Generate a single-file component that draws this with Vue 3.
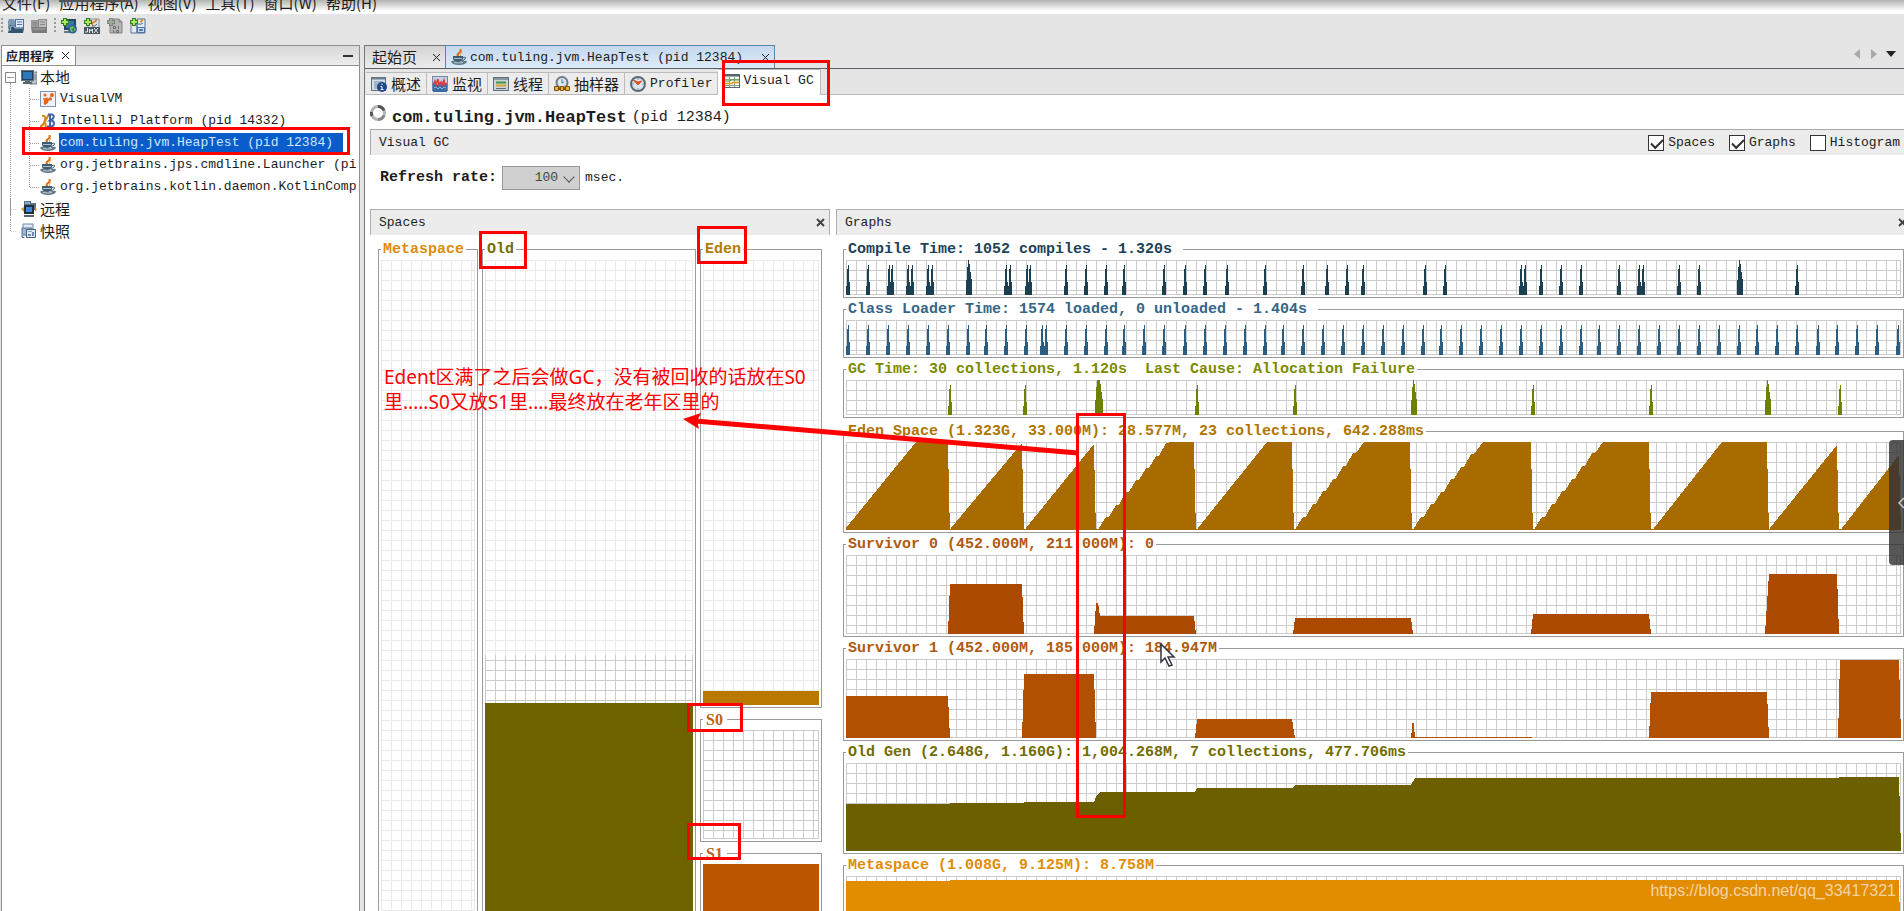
<script setup>
import { ref } from 'vue'

const menus = ['文件(F)', '应用程序(A)', '视图(V)', '工具(T)', '窗口(W)', '帮助(H)']

const plus = '<path d="M2 0h4v2h2v4H6v2H2V6H0V2h2z" fill="#2f7d1e"/><path d="M3 1h2v2h2v2H5v2H3V5H1V3h2z" fill="#a8e860"/>'
const icons = {
  open: '<path d="M0 3l1-2h5l1 2v8H0z" fill="#7d97b0"/><path d="M7 1h9v10H7z" fill="#4c72a4"/><path d="M8 2h7v7H8z" fill="#dfeaf6"/><path d="M9 4h5M9 6.500h5" stroke="#4c78b8"/><path d="M0 15L2 7h4l2 3h8l-1 5z" fill="#35536d"/><path d="M2 13l1-5h3l1 2h8" stroke="#a9c4da" fill="none"/>',
  save: '<path d="M0 2h7v8H0z" fill="#9a9a9a"/><path d="M7 1h9v10H7z" fill="#8a8a8a"/><path d="M8 2h7v7H8z" fill="#bdbdbd"/><path d="M9 4h5M9 6.500h5M2 5h4M2 7h4" stroke="#8a8a8a"/><path d="M0 9h16v6H1z" fill="#7c7c7c"/><path d="M2 11h12" stroke="#a4a4a4"/>',
  remote: '<path d="M3 1h12v11H3z" fill="#26485c"/><path d="M5 3h8v7H5z" fill="#3a78a8"/><path d="M3 13h8v2H3z" fill="#6c7880"/><circle cx="11.500" cy="11" r="4.500" fill="#2f6496"/><path d="M9 9l3-1 1 2-2 1 1 3h-2l-1-3zM13 10l2 1-2 3z" fill="#6fbf58"/>' + plus,
  jmx: '<path d="M4 1h11v13H4z" fill="#d9e0e6" stroke="#8493a0"/><path d="M12 1q1 2-2 3t-1 4" stroke="#e07818" stroke-width="1.500" fill="none"/><path d="M8 8q3 1 5-2" stroke="#4c7088" fill="none"/><path d="M0 9h16v7H0z" fill="#4a5862"/><path d="M3.500 10v4H1M5.500 15v-4l1.500 2 1.500-2v4M10 10l4 5M14 10l-4 5" stroke="#e4ebf0" fill="none"/>' + plus,
  core: '<path d="M4 1h8l3 3v11H3V3z" fill="#b4b4b4" stroke="#848484"/><path d="M12 1v3h3" stroke="#848484" fill="none"/><path d="M6.500 8.500h2v2h-2zM11.500 8v3M6.500 12v3M9.500 12.500h2v2h-2z" stroke="#6a6a6a" fill="none"/><path d="M2 0h4v2h2v4H6v2H2V6H0V2h2z" fill="#7c8878"/><path d="M3 1h2v2h2v2H5v2H3V5H1V3h2z" fill="#a0aa9c"/>',
  snapshotAdd: '<path d="M1 3h6v12H1zM7 1h8v14H7z" fill="#e4ebf4" stroke="#5c7494"/><path d="M12 1q1 2-2 3" stroke="#e07818" stroke-width="1.500" fill="none"/><path d="M8 6q3 1 5-1" stroke="#4c7088" fill="none"/><path d="M7.500 9.500h7v5h-7z" fill="#c8daee" stroke="#4872a8"/><path d="M9.500 11.500h3v1h-3z" fill="#fff" stroke="#4872a8"/>' + plus,
  computer: '<path d="M11 3h5v12h-7v-2h2z" fill="#c0c8ce" stroke="#6a7884"/><path d="M13 6h2M13 8h2M13 10h2" stroke="#6a7884"/><path d="M0 1h13v11H0z" fill="#5e7484"/><path d="M1 2h11v9H1z" fill="#20425e"/><path d="M2 3h9v7H2z" fill="#2c78b8"/><path d="M4 12h5v1h2v2H2v-2h2z" fill="#56666f"/>',
  visualvm: '<rect x=".5" y=".5" width="15" height="15" fill="#eef1f7" stroke="#7c94b8"/><circle cx="5" cy="4" r="1.500" fill="#e8641c"/><circle cx="12" cy="4" r="2" fill="#e8641c"/><circle cx="10.500" cy="8" r="1.500" fill="#e8641c"/><path d="M3 7q3 1 4-1l1 2 4-4-3 5q-1 4-4 5-2-1-1-4z" fill="#e8641c"/>',
  intellij: '<path d="M2 3q4-1 3 4T0 14M9 1Q6 7 2 13M4 8q2 3 2 7" stroke="#d8891c" stroke-width="2" fill="none"/><path d="M8 1.500h4q3 1 1 4l-3 2q4 0 4 3t-4 3H7M10 2v11M9 7h3" stroke="#3f64ac" stroke-width="2" fill="none"/>',
  java: '<path d="M9 0q2 2-1 4t0 4" stroke="#dd6c0c" stroke-width="2" fill="none"/><path d="M11 3q-3 2-1 5" stroke="#f0a040" fill="none"/><path d="M2 7h10v3q-1 3-5 3t-5-3z" fill="#3f5c70"/><path d="M12 8.500q4-1 2 1.500l-3 2" stroke="#3f5c70" fill="none"/><path d="M3 9.500h8" stroke="#a8bfcd"/><path d="M0 13q1-2 4-1 4 2 8 0 4-1 4 1-2 3-8 3t-8-3z" fill="#5f7787"/><path d="M3 13.500q5 1 9 0" stroke="#bccbd5" fill="none"/>',
  remotes: '<path d="M3 0h7v6H3zM9 2h6v7H9z" fill="#5c7284"/><path d="M4 1h5v2H4z" fill="#86a8c4"/><path d="M3 4h10v9H3z" fill="#20303e"/><path d="M5 6h6v5H5z" fill="#3f88d8"/><path d="M0 8l3-2v5zM16 8l-2-2v5z" fill="#e0982a"/><path d="M3 14h10v2H3z" fill="#56646f"/>',
  snapshots: '<path d="M2 1h10v8H2z" fill="#dfe9f4" stroke="#6c88ac"/><path d="M1 5h10v7H1z" fill="#9db6d4" stroke="#54749c"/><path d="M5.500 6.500h9v8h-9z" fill="#e4ebf3" stroke="#48607e"/><path d="M7 11h3v2H7zM11 9h2v4h-2z" fill="#6c8cb8"/><path d="M7 8.500h4" stroke="#8ca4c4"/><path d="M0 12l4 3H1z" fill="#48688c"/>',
  overview: '<rect x=".5" y="1.500" width="14" height="13" fill="#d4dfe8" stroke="#5c7080"/><path d="M1 2.500h13" stroke="#6c8090" stroke-width="2"/><path d="M3 6h9M3 8h5M3 10h4M3 12h4" stroke="#6c8aa4"/><circle cx="11" cy="11" r="5" fill="#1e4888"/><path d="M11 7.500v1.500M9.500 10.500H11v3M9.500 13.500h3" stroke="#fff" fill="none"/>',
  monitor: '<rect x=".5" y=".5" width="15" height="14" fill="#c4d2e4" stroke="#7488a4"/><path d="M1 9l2-2 2 2 2-3 2 3 2-2 2 2 2-2v9H1z" fill="#3c6ca8"/><path d="M1 9l2-4 1 4 2-6 1 6 2-3 1 3 2-5 1 5 2-2" stroke="#d83c38" fill="none" stroke-width="1.500"/><path d="M2 12l2-1 2 2 2-2 2 2 2-2 2 1" stroke="#88b4e0" fill="none"/>',
  threads: '<rect x=".5" y="1.500" width="15" height="13" fill="#c9d2d8" stroke="#5f6f7c"/><path d="M1 3h14" stroke="#8898a4" stroke-width="2"/><path d="M3 6.500h10" stroke="#3f9440" stroke-width="2"/><path d="M3 9.500h10" stroke="#dca030" stroke-width="2"/><path d="M3 12.500h10" stroke="#5c6c74"/>',
  sampler: '<circle cx="8" cy="6.500" r="5.500" fill="#dce8f0" stroke="#6c7c8c" stroke-width="2"/><path d="M8 3v4l2-1" stroke="#4878a8" fill="none"/><path d="M.500 10.500h4v4h-4zM6.500 10.500h3v4h-3zM11.500 10.500h4v4h-4z" fill="#f0b030" stroke="#805008"/><path d="M4 13h3M9 13h3" stroke="#805008" stroke-width="2"/>',
  profiler: '<circle cx="8" cy="8" r="7" fill="#d9e6ef" stroke="#5c6a76" stroke-width="2"/><path d="M8 2v2M8 12v2M2 8h2M12 8h2" stroke="#8098ac"/><path d="M3 4l5 5 4-4-4 1z" fill="#d85820" stroke="#d85820"/>',
  gc: '<rect x=".5" y="1.500" width="15" height="13" fill="#f2f6ee" stroke="#56646c"/><path d="M1 2.500h14" stroke="#56646c" stroke-width="2"/><path d="M5.500 4v10M10.500 4v10M1 6.500h14M1 12.500h14" stroke="#8ca090"/><path d="M1 8h5l1-1h8" stroke="#50a040" fill="none"/><path d="M1 10.500h7l1-1h6" stroke="#e0a020" fill="none" stroke-width="1.500"/>'
}

const tools = [
  { icon: 'open', label: '打开' }, { icon: 'save', label: '保存' }, null,
  { icon: 'remote', label: '添加远程主机' }, { icon: 'jmx', label: '添加 JMX 连接' },
  { icon: 'core', label: '添加核心转储' }, { icon: 'snapshotAdd', label: '添加快照' }
]

const localApps = [
  { icon: 'visualvm', text: 'VisualVM' },
  { icon: 'intellij', text: 'IntelliJ Platform (pid 14332)' },
  { icon: 'java', text: 'com.tuling.jvm.HeapTest (pid 12384)', selected: true },
  { icon: 'java', text: 'org.jetbrains.jps.cmdline.Launcher (pi' },
  { icon: 'java', text: 'org.jetbrains.kotlin.daemon.KotlinComp' }
]

const views = [
  { icon: 'overview', text: '概述', cjk: true }, { icon: 'monitor', text: '监视', cjk: true },
  { icon: 'threads', text: '线程', cjk: true }, { icon: 'sampler', text: '抽样器', cjk: true },
  { icon: 'profiler', text: 'Profiler' }, { icon: 'gc', text: 'Visual GC', active: true }
]

const toggles = ref([
  { text: 'Spaces', on: true }, { text: 'Graphs', on: true }, { text: 'Histogram', on: false }
])
const rate = ref('100')

const spike = (x, h) =>
  `M${x - 2} ${h}V${h - 4}L${x - 1} ${h - 13}V${h - 22}L${x} ${h - 30}H${x + 1}V${h - 13}L${x + 2} ${h - 12}V${h}z`
const burst = (x, h, w) => `M${x - w} ${h}V${h - 8}L${x - w + 2} 0H${x + w - 3}L${x + w} ${h - 12}V${h}z`

const compileAt = [2, 22, 43, 46, 62, 66, 82, 86, 160, 164, 181, 184, 220, 240, 260, 278, 318, 339, 359, 381, 419, 457, 481, 501, 517, 579, 599, 675, 679, 695, 715, 735, 773, 793, 797, 833, 853, 951]
const loaderAt = [2, 22, 42, 62, 82, 102, 122, 140, 160, 180, 196, 200, 220, 240, 260, 278, 298, 318, 339, 359, 379, 399, 419, 437, 457, 477, 497, 517, 537, 557, 577, 595, 615, 635, 655, 675, 695, 715, 735, 753, 773, 793, 813, 833, 853, 873, 893, 911, 931, 951, 972, 991, 1011, 1031, 1052]
const gcAt = [104, 179, 351, 449, 687, 805, 994]

// start, end of ramp, end of plateau, peak height, stepped ramp
const edenRuns = [
  [0, 70, 102, 0, 0], [105, 176, 176, 1, 0], [180, 248, 248, 2, 0], [253, 323, 348, 0, 1],
  [352, 421, 446, 0, 0], [450, 518, 564, 0, 1], [568, 637, 685, 0, 1], [689, 757, 803, 0, 1],
  [808, 876, 921, 0, 0], [924, 991, 991, 3, 0], [996, 1053, 1053, 13, 0]
]
const edenPath = edenRuns.map(([a, b, c, top, stepped]) => {
  let d = `M${a} 88V86`
  if (stepped) {
    for (let x = a + 9; x < b; x += 10) {
      const y = Math.round(86 - ((86 - top) * (x - a)) / (b - a))
      d += `L${x - 2} ${y}H${x + 1}`
    }
  }
  return d + `L${b} ${top}H${c}L${c + 1} 52L${c + 2} 88z`
}).join('') + 'M0 87H1055V88H0z'

const graphs = [
  { title: 'Compile Time: 1052 compiles - 1.320s ', h: 35, ink: '#1c4258', fill: '#1d3f52', d: compileAt.map(x => spike(x, 35)).join('') + burst(123, 35, 3) + burst(894, 35, 3) },
  { title: 'Class Loader Time: 1574 loaded, 0 unloaded - 1.404s ', h: 35, ink: '#336688', fill: '#2b5d80', d: loaderAt.map(x => spike(x, 35)).join('') },
  { title: 'GC Time: 30 collections, 1.120s  Last Cause: Allocation Failure', h: 35, ink: '#7d8a00', fill: '#6e8200', gap: true, d: gcAt.map(x => spike(x, 35)).join('') + burst(253, 35, 4) + burst(568, 35, 3) + burst(922, 35, 3) },
  { title: 'Eden Space (1.323G, 33.000M): 28.577M, 23 collections, 642.288ms', h: 88, ink: '#b07400', fill: '#a86b00', d: edenPath },
  { title: 'Survivor 0 (452.000M, 211.000M): 0', h: 79, ink: '#b05a10', fill: '#ab4a00', d: 'M102 79L104 29H176L178 79zM248 79L250 48H252L254 61H348L350 79zM447 79L449 63H565L567 79zM685 79L687 59H803L805 79zM919 79L923 19H991L993 79z' },
  { title: 'Survivor 1 (452.000M, 185.000M): 184.947M', h: 79, ink: '#b05a10', fill: '#b05000', d: 'M0 79V37H102L104 79zM176 79L178 15H248L250 79zM349 79L351 60H446L449 79zM565 79L567 59L569 78H686V79zM803 79L805 33H921L923 79zM992 79L994 1H1053L1055 79z' },
  { title: 'Old Gen (2.648G, 1.160G): 1,004.268M, 7 collections, 477.706ms', h: 88, ink: '#736c00', fill: '#6b5f00', d: 'M0 88V41H104V40H178V39H248L251 32L254 29H349L351 25H447L449 22H565L569 15H993V14H1053L1055 88z' },
  { title: 'Metaspace (1.008G, 9.125M): 8.758M', h: 88, ink: '#e08c08', fill: '#e28c00', d: 'M0 88V5H104V4H1053L1055 88z' }
]
</script>

<template>
  <div class="app">
    <nav class="menubar">
      <button v-for="m in menus" :key="m" type="button">{{ m }}</button>
    </nav>

    <div class="toolbar">
      <i class="grip"></i>
      <template v-for="(t, i) in tools" :key="i">
        <i v-if="!t" class="grip"></i>
        <button v-else type="button" :aria-label="t.label"><svg class="icon" viewBox="0 0 16 16" v-html="icons[t.icon]"></svg></button>
      </template>
    </div>

    <div class="workspace">
      <aside class="sidebar">
        <header class="side-head">
          <div class="side-tab">
            <span>应用程序</span>
            <button type="button" aria-label="关闭"><svg class="x" viewBox="0 0 9 9"><path d="M1 1l7 7M8 1l-7 7" /></svg></button>
          </div>
          <button type="button" class="minimize" aria-label="最小化"></button>
        </header>
        <ul class="tree">
          <li class="root first">
            <div class="row"><i class="expander"></i><svg class="icon" viewBox="0 0 16 16" v-html="icons.computer"></svg><span class="cjk">本地</span></div>
            <ul class="children">
              <li v-for="a in localApps" :key="a.text" class="row">
                <svg class="icon" viewBox="0 0 16 16" v-html="icons[a.icon]"></svg>
                <span class="name" :class="{ selected: a.selected }">{{ a.text }}</span>
              </li>
            </ul>
          </li>
          <li class="root"><div class="row"><i class="stub"></i><svg class="icon" viewBox="0 0 16 16" v-html="icons.remotes"></svg><span class="cjk">远程</span></div></li>
          <li class="root last"><div class="row"><i class="stub"></i><svg class="icon" viewBox="0 0 16 16" v-html="icons.snapshots"></svg><span class="cjk">快照</span></div></li>
        </ul>
      </aside>

      <main class="main">
        <div class="doc-tabs">
          <div class="doc-tab">
            <span class="cjk">起始页</span>
            <button type="button" aria-label="关闭"><svg class="x" viewBox="0 0 9 9"><path d="M1 1l7 7M8 1l-7 7" /></svg></button>
          </div>
          <div class="doc-tab current">
            <svg class="icon" viewBox="0 0 16 16" v-html="icons.java"></svg>
            <span class="doc-name">com.tuling.jvm.HeapTest (pid 12384)</span>
            <button type="button" aria-label="关闭"><svg class="x" viewBox="0 0 9 9"><path d="M1 1l7 7M8 1l-7 7" /></svg></button>
          </div>
          <div class="doc-nav">
            <button type="button" aria-label="向左"><svg width="12" height="12"><path d="M9 1v10L3 6z" fill="#a8a8a8" /></svg></button>
            <button type="button" aria-label="向右"><svg width="12" height="12"><path d="M3 1v10l6-5z" fill="#a8a8a8" /></svg></button>
            <button type="button" aria-label="列表"><svg width="12" height="12"><path d="M1 3h10L6 9z" fill="#222" /></svg></button>
          </div>
        </div>

        <div class="view-tabs">
          <button v-for="v in views" :key="v.text" type="button" :class="{ active: v.active }">
            <svg class="icon" viewBox="0 0 16 16" v-html="icons[v.icon]"></svg>
            <span :class="{ cjk: v.cjk }">{{ v.text }}</span>
          </button>
          <i class="rest"></i>
        </div>

        <h1 class="title">
          <svg width="18" height="18" viewBox="0 0 18 18" fill="none" stroke-width="3">
            <circle cx="9" cy="9" r="6.500" stroke="#b4b4b4" />
            <path d="M9 2.500a6.500 6.500 0 0 1 6 4M3 12a6.500 6.500 0 0 1-.5-4" stroke="#555" />
            <path d="M9 15.500a6.500 6.500 0 0 0 6-4" stroke="#888" />
          </svg>
          <b>com.tuling.jvm.HeapTest</b><span>(pid 12384)</span>
        </h1>

        <div class="section-bar">
          <span>Visual GC</span>
          <div class="toggles">
            <label v-for="t in toggles" :key="t.text"><input v-model="t.on" type="checkbox" />{{ t.text }}</label>
          </div>
        </div>

        <div class="refresh">
          <label for="rate">Refresh rate:</label>
          <div class="select">
            <select id="rate" v-model="rate"><option>100</option><option>200</option><option>500</option></select>
          </div>
          <span>msec.</span>
        </div>

        <div class="panels">
          <section class="spaces">
            <header class="panel-head">
              <span>Spaces</span>
              <button type="button" aria-label="关闭"><svg class="x bold" viewBox="0 0 9 9"><path d="M1 1l7 7M8 1l-7 7" /></svg></button>
            </header>
            <div class="space-row">
              <fieldset class="box meta"><legend>Metaspace</legend><div class="plot faint fill"></div></fieldset>
              <fieldset class="box old">
                <legend>Old</legend>
                <div class="plot faint reserved"></div>
                <div class="plot committed"></div>
                <div class="used"></div>
              </fieldset>
              <div class="young">
                <fieldset class="box eden"><legend>Eden</legend><div class="plot faint reserved"></div><div class="used"></div></fieldset>
                <fieldset class="box s0"><legend>S0</legend><div class="plot"></div></fieldset>
                <fieldset class="box s1"><legend>S1</legend><div class="used"></div></fieldset>
              </div>
            </div>
          </section>

          <section class="graphs">
            <header class="panel-head">
              <span>Graphs</span>
              <button type="button" aria-label="关闭"><svg class="x bold" viewBox="0 0 9 9"><path d="M1 1l7 7M8 1l-7 7" /></svg></button>
            </header>
            <div class="graph-list">
              <fieldset v-for="g in graphs" :key="g.title" class="box" :class="{ gap: g.gap }">
                <legend :style="{ color: g.ink }">{{ g.title }}</legend>
                <div class="plot" :style="{ height: g.h + 'px' }">
                  <svg :viewBox="`0 0 1055 ${g.h}`" preserveAspectRatio="none" shape-rendering="crispEdges"><path :d="g.d" :fill="g.fill" /></svg>
                </div>
              </fieldset>
            </div>
          </section>
        </div>
      </main>
    </div>

    <i class="mark m-tree"></i>
    <i class="mark m-view"></i>
    <i class="mark m-old"></i>
    <i class="mark m-eden"></i>
    <i class="mark m-s0"></i>
    <i class="mark m-s1"></i>
    <i class="mark m-graph"></i>
    <p class="note">Edent区满了之后会做GC，没有被回收的话放在S0<br />里.....S0又放S1里....最终放在老年区里的</p>
    <svg class="arrow" width="396" height="46" viewBox="0 0 396 46">
      <path d="M12 9L395 41" stroke="#f00" stroke-width="5" />
      <path d="M0 7L18 1L14 9L16 17z" fill="#f00" />
    </svg>
    <svg class="cursor" width="16" height="25" viewBox="0 0 16 25"><path d="M1 1v18l4-4 4 8 3-1-4-8h6z" fill="#fff" stroke="#334" stroke-width="1.500" /></svg>
    <button type="button" class="drawer" aria-label="展开"><svg width="6" height="12" viewBox="0 0 6 12"><path d="M6 1L1 6l5 5" fill="none" stroke="#ccc" stroke-width="1.500" /></svg></button>
    <span class="watermark">https://blog.csdn.net/qq_33417321</span>
  </div>
</template>

<style>
body { margin: 0; overflow: hidden; }
</style>

<style scoped>
.app {
  --mono: "Liberation Mono", "Noto Sans CJK SC", monospace;
  --cjk: "Noto Sans CJK SC", sans-serif;
  position: relative;
  display: flex;
  flex-direction: column;
  height: 100vh;
  overflow: hidden;
  background: #e5e5e5;
  color: #1c1c1c;
  font: 13px/20px var(--mono);
}
.app * { box-sizing: border-box; }
button { padding: 0; border: 0; background: none; color: inherit; font: inherit; }
ul { margin: 0; padding: 0; list-style: none; }
.icon { display: block; flex: none; width: 16px; height: 16px; }
.cjk { font: 15px/20px var(--cjk); }
.x { display: block; width: 9px; height: 9px; fill: none; stroke: #222; stroke-width: 1; }
.x.bold { stroke: #444; stroke-width: 2; }

.menubar {
  position: relative;
  display: flex;
  flex: none;
  align-items: flex-end;
  gap: 9px;
  height: 14px;
  padding: 0 0 1px 2px;
  overflow: hidden;
  background: linear-gradient(#b4b4b4, #fff 11px);
  font: 15px/20px var(--cjk);
}
.menubar::before { content: ""; position: absolute; top: 0; left: 59px; width: 71px; height: 2px; background: #555; }
.toolbar { display: flex; flex: none; align-items: flex-start; gap: 7px; height: 31px; padding: 4px 1px; }
.grip { width: 2px; height: 15px; background: repeating-linear-gradient(#999 0 2px, transparent 2px 4px); }
.grip + button { margin-left: -2px; }

.workspace { display: flex; flex: 1; min-height: 0; gap: 4px; }
.sidebar { display: flex; flex: none; flex-direction: column; width: 359px; margin-left: 1px; border: 1px solid #8c8f94; border-bottom: 0; background: #fff; }
.side-head { display: flex; flex: none; height: 20px; border-bottom: 1px solid #8c8f94; background: linear-gradient(#d8d8d8, #ececec); }
.side-tab { display: flex; align-items: center; gap: 7px; padding: 0 5px 0 4px; border-right: 1px solid #8c8f94; background: #fff; font: bold 12px/18px var(--cjk); }
.minimize { align-self: center; width: 10px; height: 2px; margin: 0 6px 0 auto; background: #333; }
.tree { overflow: hidden; padding-left: 3px; }
.row { display: flex; align-items: center; gap: 3px; height: 22px; white-space: nowrap; }
.root { position: relative; }
.root::before { content: ""; position: absolute; left: 5px; top: 0; height: 100%; border-left: 1px dotted #999; }
.root.first::before { top: 17px; }
.root.last::before { height: 11px; }
.expander { position: relative; z-index: 1; flex: none; width: 11px; height: 11px; margin-right: 2px; border: 1px solid #888; background: linear-gradient(#999, #999) center / 7px 1px no-repeat #fff; }
.stub { flex: none; width: 11px; margin-right: 2px; border-top: 1px dotted #999; clip-path: inset(0 0 0 5px); }
.children { position: relative; padding-left: 35px; }
.children::before { content: ""; position: absolute; left: 24px; top: 0; height: 99px; border-left: 1px dotted #999; }
.children .row { position: relative; }
.children .row::before { content: ""; position: absolute; left: -10px; width: 9px; border-top: 1px dotted #999; }
.name { min-width: 0; padding: 0 1px; overflow: hidden; }
.name.selected { padding-right: 10px; background: #0a5ccb; color: #cfe6ff; }

.main { display: flex; flex: 1; flex-direction: column; min-width: 0; border-left: 1px solid #777; background: #fff; }
.doc-tabs { display: flex; flex: none; height: 24px; border-bottom: 1px solid #5c5f66; background: #e5e5e5; }
.doc-tab { display: flex; align-items: center; padding: 0 4px 0 7px; border-top: 1px solid #777; background: linear-gradient(#d4d4d4, #ececec); }
.doc-tab button { margin-left: 15px; }
.doc-tab.current { gap: 3px; padding: 0 4px 0 5px; border: 1px solid #5487a8; border-bottom: 0; background: linear-gradient(#c4d8ee, #dcebf8); }
.doc-name { width: 281px; padding-top: 2px; }
.doc-tab.current button { margin-left: 7px; }
.doc-nav { display: flex; gap: 5px; margin: 0 7px 0 auto; }
.view-tabs { display: flex; flex: none; align-items: flex-end; height: 26px; padding-left: 1px; background: #e5e5e5; }
.view-tabs button { display: flex; align-items: center; gap: 4px; height: 23px; padding: 0 5px; border: 1px solid #bbb; border-left: 0; background: #ececec; }
.view-tabs button.active { align-self: stretch; gap: 3px; height: auto; padding: 0 6px 3px 6px; border-bottom: 0; background: #fff; }
.rest { flex: 1; align-self: stretch; border-bottom: 1px solid #bbb; }
.title { display: flex; flex: none; align-items: center; gap: 5px; height: 34px; margin: 0; padding: 0 4px; font: 15px/20px var(--mono); }
.title svg { align-self: flex-start; margin-top: 9px; }
.title b { margin-top: 11px; font-size: 17px; }
.title span { margin-top: 11px; }
.section-bar { display: flex; flex: none; align-items: center; height: 26px; margin-left: 5px; padding: 0 4px 0 8px; border: solid #aaa; border-width: 1px 0 0 1px; background: #ececec; }
.toggles { display: flex; gap: 14px; margin-left: auto; }
.toggles label { display: flex; align-items: center; gap: 4px; }
.toggles input { width: 16px; height: 16px; margin: 0; appearance: none; border: 1px solid #333; background: #fff; }
.toggles input:checked::before { content: ""; display: block; width: 10px; height: 5px; margin: 3px 0 0 2px; border: solid #333; border-width: 0 0 2px 2px; transform: rotate(-45deg); }
.refresh { display: flex; flex: none; align-items: center; gap: 5px; height: 54px; padding: 0 0 9px 15px; }
.refresh label { font-size: 15px; font-weight: bold; }
.select { position: relative; width: 78px; height: 24px; }
.select::after { content: ""; position: absolute; right: 7px; top: 7px; width: 7px; height: 7px; border: solid #555; border-width: 0 1px 1px 0; transform: rotate(45deg); pointer-events: none; }
.select select { width: 100%; height: 100%; padding: 0 21px 0 0; appearance: none; border: 1px solid #999; border-radius: 0; background: #d0d0d0; color: #444; font: inherit; text-align: right; text-align-last: right; }

.panels { display: flex; flex: none; gap: 6px; padding-left: 5px; }
.panel-head { display: flex; flex: none; align-items: center; justify-content: space-between; height: 26px; padding: 0 4px 0 8px; border: solid #b0b0b0; border-width: 1px 1px 0 1px; background: #ececec; }
.spaces { display: flex; flex: none; flex-direction: column; width: 460px; }
.space-row { display: grid; flex: 1; grid-template-columns: 100px 214px 122px; gap: 4px; padding: 6px 8px 0; }
.box { display: flex; flex-direction: column; min-width: 0; margin: 0; padding: 2px; border: 1px solid #9a9a9a; }
.box legend { padding: 0 2px; font: bold 15px/17px var(--mono); white-space: pre; }
.plot { flex: none; border: solid #ccc; border-width: 0 1px 1px 0; background: repeating-linear-gradient(90deg, #ccc 0 1px, transparent 1px 10px), repeating-linear-gradient(#ccc 0 1px, transparent 1px 10px); }
.plot.faint { border-color: #eaeaea; background: repeating-linear-gradient(90deg, #eaeaea 0 1px, transparent 1px 10px), repeating-linear-gradient(#eaeaea 0 1px, transparent 1px 10px); }
.plot.fill { flex: 1; }
.plot svg { display: block; width: calc(100% + 1px); height: calc(100% + 1px); }
.used { flex: 1; }
.meta legend { color: #dc8c10; }
.old legend { color: #736c00; }
.old .reserved { height: 395px; border-bottom: 0; }
.old .committed { height: 48px; border-bottom: 0; background-position: 0 0, 0 5px; }
.old .used { background: #6f6300; }
.young { display: flex; flex-direction: column; gap: 3px; }
.eden .reserved { height: 431px; border-bottom: 0; }
.eden legend { color: #b07c00; }
.eden .used { flex: none; height: 14px; background: #b97800; }
.s0 legend, .s1 legend { padding: 0 4px 0 3px; color: #b8641c; font: bold 16px/17px "Liberation Serif", serif; }
.s0 .plot { height: 109px; }
.s1 .used { flex: none; height: 109px; background: #bb5500; }
.graphs { flex: 1; min-width: 0; }
.graphs .panel-head { border-right: 0; padding-right: 0; }
.graphs .panel-head button { width: 6px; overflow: hidden; }
.graph-list { display: flex; flex-direction: column; gap: 3px; padding: 6px 0 0 7px; }
.box.gap { margin-bottom: 2px; }

.mark { position: absolute; border: 3px solid #f00; }
.m-tree { left: 22px; top: 127px; width: 328px; height: 28px; }
.m-view { left: 722px; top: 60px; width: 108px; height: 46px; }
.m-old { left: 479px; top: 231px; width: 48px; height: 38px; }
.m-eden { left: 697px; top: 226px; width: 50px; height: 38px; }
.m-s0 { left: 687px; top: 703px; width: 56px; height: 29px; }
.m-s1 { left: 687px; top: 823px; width: 54px; height: 37px; }
.m-graph { left: 1076px; top: 413px; width: 50px; height: 405px; }
.note { position: absolute; left: 384px; top: 365px; margin: 0; color: #f00; font: 19px/25px "Noto Sans", "Noto Sans CJK SC", sans-serif; white-space: nowrap; }
.arrow { position: absolute; left: 683px; top: 412px; }
.cursor { position: absolute; left: 1160px; top: 643px; }
.drawer { position: absolute; right: 0; top: 440px; display: flex; align-items: center; justify-content: flex-end; width: 15px; height: 125px; border-radius: 4px 0 0 4px; background: rgba(50, 50, 50, 0.82); }
.watermark { position: absolute; right: 8px; bottom: 10px; color: rgba(255, 255, 255, 0.65); font: 16px/20px "Liberation Sans", sans-serif; }
</style>
